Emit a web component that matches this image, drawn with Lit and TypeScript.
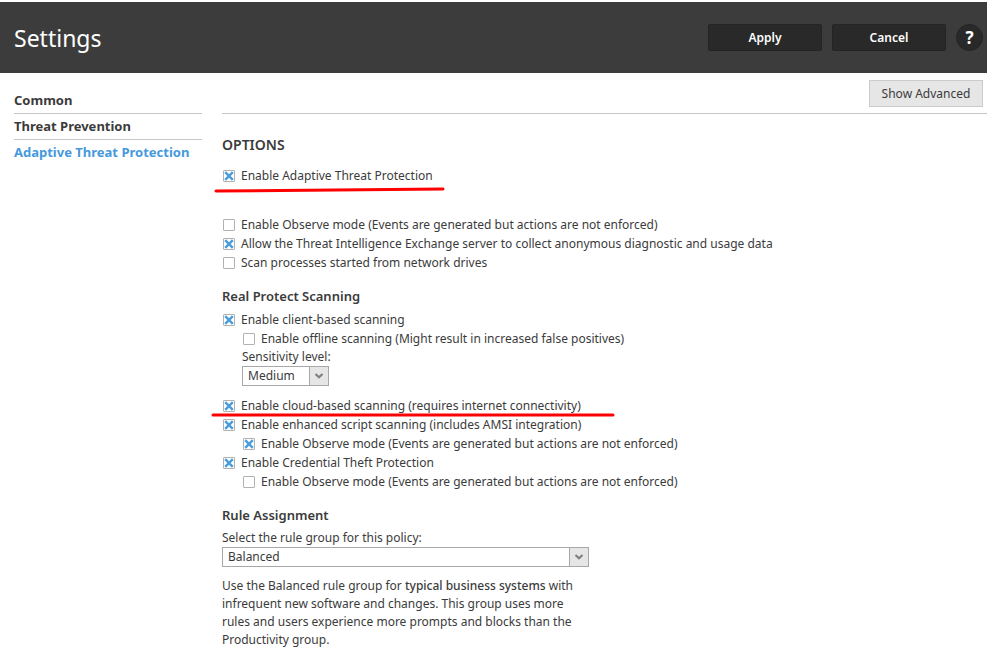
import { LitElement, html, svg, css } from "lit";
import { customElement, property } from "lit/decorators.js";

interface Option {
  id: string;
  text: string;
  on?: boolean;
  nested?: boolean;
}

const GENERAL: Option[] = [
  { id: "observe", text: "Enable Observe mode (Events are generated but actions are not enforced)" },
  {
    id: "tie",
    text: "Allow the Threat Intelligence Exchange server to collect anonymous diagnostic and usage data",
    on: true,
  },
  { id: "network", text: "Scan processes started from network drives" },
];

const CLIENT: Option[] = [
  { id: "client", text: "Enable client-based scanning", on: true },
  { id: "offline", text: "Enable offline scanning (Might result in increased false positives)", nested: true },
];

const SCRIPT: Option[] = [
  { id: "script", text: "Enable enhanced script scanning (includes AMSI integration)", on: true },
  {
    id: "script-observe",
    text: "Enable Observe mode (Events are generated but actions are not enforced)",
    on: true,
    nested: true,
  },
  { id: "credential", text: "Enable Credential Theft Protection", on: true },
  {
    id: "credential-observe",
    text: "Enable Observe mode (Events are generated but actions are not enforced)",
    nested: true,
  },
];

@customElement("option-check")
export class OptionCheck extends LitElement {
  @property({ attribute: false }) option!: Option;

  static styles = css`
    :host {
      display: block;
    }
    .row {
      display: flex;
      align-items: center;
      gap: 6px;
      height: 19px;
      padding-left: 1px;
    }
    .nested {
      padding-left: 21px;
    }
    .mark {
      display: grid;
      flex: none;
    }
    .box,
    .cross {
      grid-area: 1 / 1;
      width: 12px;
      height: 12px;
    }
    .box {
      appearance: none;
      margin: 0;
      box-sizing: border-box;
      border: 1px solid #b2b2b2;
      border-radius: 1px;
      background: #fff;
    }
    .cross {
      pointer-events: none;
      visibility: hidden;
    }
    .box:checked + .cross {
      visibility: visible;
    }
    .text {
      white-space: nowrap;
    }
  `;

  render() {
    const { id, text, on, nested } = this.option;
    return html`
      <div class="row ${nested ? "nested" : ""}">
        <span class="mark">
          <input class="box" type="checkbox" id=${id} .checked=${!!on} />
          <svg class="cross" viewBox="0 0 12 12" aria-hidden="true">
            <path d="M2.2 2.2 9.8 9.8M9.8 2.2 2.2 9.8" fill="none" stroke="#4a9ddb" stroke-width="2.4" />
          </svg>
        </span>
        <label class="text" for=${id}>${text}</label>
      </div>
    `;
  }
}

@customElement("choice-box")
export class ChoiceBox extends LitElement {
  @property() label = "";
  @property({ attribute: false }) choices: string[] = [];

  static styles = css`
    :host {
      display: block;
    }
    .label {
      display: block;
      line-height: 18px;
      white-space: nowrap;
    }
    .frame {
      display: grid;
      grid-template-columns: 1fr 20px;
      height: 20px;
    }
    .select {
      grid-area: 1 / 1 / 2 / 3;
      appearance: none;
      min-width: 0;
      box-sizing: border-box;
      height: 20px;
      padding: 0 20px 0 5px;
      border: 1px solid #aba7a9;
      border-radius: 0;
      background: #fff;
      color: inherit;
      font: inherit;
      line-height: 18px;
    }
    .arrow {
      grid-area: 1 / 2;
      z-index: 1;
      display: flex;
      align-items: center;
      justify-content: center;
      box-sizing: border-box;
      border: 1px solid #aba7a9;
      background: #e6e6e6;
      pointer-events: none;
    }
  `;

  render() {
    return html`
      <label class="label" for="choice">${this.label}</label>
      <div class="frame">
        <select class="select" id="choice">
          ${this.choices.map((c) => html`<option>${c}</option>`)}
        </select>
        <span class="arrow">
          <svg width="10" height="8" viewBox="0 0 10 8" aria-hidden="true">
            <path d="M1.5 2 5 5.3 8.5 2" fill="none" stroke="#808080" stroke-width="2.2" />
          </svg>
        </span>
      </div>
    `;
  }
}

@customElement("app-root")
export class AppRoot extends LitElement {
  static styles = css`
    :host {
      display: block;
      padding-top: 2px;
      background: #fff;
      color: #3b3b3b;
      font: 12px/18px "Noto Sans", "Open Sans", sans-serif;
    }
    .header {
      display: flex;
      align-items: center;
      gap: 10px;
      height: 71px;
      padding: 0 4px 0 14px;
      background: #3c3c3c;
      color: #fff;
    }
    .title {
      flex: 1;
      margin: 0;
      font-size: 23px;
      font-weight: 400;
      line-height: 32px;
    }
    .action,
    .help {
      box-sizing: border-box;
      height: 27px;
      padding: 0;
      border: 1px solid #242424;
      background: #292929;
      color: #fff;
      font: 600 12px/18px "Noto Sans", "Open Sans", sans-serif;
    }
    .action {
      width: 114px;
      border-radius: 2px;
    }
    .help {
      width: 27px;
      border-radius: 50%;
      font-size: 17px;
      font-weight: 700;
    }
    .body {
      display: grid;
      grid-template-columns: 188px 1fr;
      gap: 20px;
      padding-left: 14px;
    }
    .nav {
      padding-top: 15px;
    }
    .link {
      display: block;
      height: 25px;
      border-bottom: 1px solid #c6c6c6;
      color: inherit;
      font-size: 13px;
      font-weight: 700;
      line-height: 24px;
      text-decoration: none;
      white-space: nowrap;
    }
    .link:last-child {
      border-bottom: 0;
      color: #4699dc;
    }
    .toolbar {
      display: flex;
      justify-content: flex-end;
      padding: 7px 4px 6px 0;
      border-bottom: 1px solid #c6c6c6;
    }
    .advanced {
      box-sizing: border-box;
      width: 114px;
      height: 27px;
      padding: 0;
      border: 1px solid #cbcbcb;
      background: #e6e6e6;
      color: inherit;
      font: inherit;
    }
    .group {
      margin-top: 14px;
    }
    .options {
      margin-top: 21px;
    }
    .heading {
      margin: 0 0 4px;
      font-size: 13px;
      font-weight: 600;
      line-height: 20px;
    }
    .options .heading {
      margin-bottom: 11px;
      font-size: 14px;
    }
    .marked {
      position: relative;
    }
    .first {
      margin-bottom: 30px;
    }
    .stroke {
      position: absolute;
      overflow: visible;
      pointer-events: none;
    }
    .stroke-first {
      left: -8px;
      top: 21px;
    }
    .stroke-cloud {
      left: -11px;
      top: 17px;
    }
    .level {
      width: 87px;
      margin: 0 0 10px 20px;
    }
    .rule {
      width: 367px;
    }
    .note {
      max-width: 367px;
      margin: 10px 0 0;
    }
    .strong {
      font-weight: 500;
    }
  `;

  private options(list: Option[]) {
    return list.map((o) => html`<option-check .option=${o}></option-check>`);
  }

  private stroke(name: string, width: number, rise: number) {
    return html`<svg class="stroke ${name}" width=${width} height="6" aria-hidden="true">
      ${svg`<path d="M2 ${2 + rise}L${width - 2} 2" stroke="#fe0000" stroke-width="3" stroke-linecap="round" />`}
    </svg>`;
  }

  render() {
    return html`
      <header class="header">
        <h1 class="title">Settings</h1>
        <button class="action">Apply</button>
        <button class="action">Cancel</button>
        <button class="help" aria-label="Help">?</button>
      </header>
      <div class="body">
        <nav class="nav">
          <a class="link" href="#common">Common</a>
          <a class="link" href="#prevention">Threat Prevention</a>
          <a class="link" href="#adaptive" aria-current="page">Adaptive Threat Protection</a>
        </nav>
        <main>
          <div class="toolbar"><button class="advanced">Show Advanced</button></div>
          <section class="options">
            <h2 class="heading">OPTIONS</h2>
            <div class="marked first">
              ${this.options([{ id: "adaptive", text: "Enable Adaptive Threat Protection", on: true }])}
              ${this.stroke("stroke-first", 231, 2)}
            </div>
            ${this.options(GENERAL)}
          </section>
          <section class="group">
            <h2 class="heading">Real Protect Scanning</h2>
            ${this.options(CLIENT)}
            <choice-box
              class="level"
              label="Sensitivity level:"
              .choices=${["Medium", "Low", "High"]}
            ></choice-box>
            <div class="marked">
              ${this.options([
                { id: "cloud", text: "Enable cloud-based scanning (requires internet connectivity)", on: true },
              ])}
              ${this.stroke("stroke-cloud", 404, 0)}
            </div>
            ${this.options(SCRIPT)}
          </section>
          <section class="group">
            <h2 class="heading">Rule Assignment</h2>
            <choice-box
              class="rule"
              label="Select the rule group for this policy:"
              .choices=${["Balanced", "Productivity", "Security"]}
            ></choice-box>
            <p class="note">
              Use the Balanced rule group for <b class="strong">typical business systems</b> with infrequent new
              software and changes. This group uses more rules and users experience more prompts and blocks than the
              Productivity group.
            </p>
          </section>
        </main>
      </div>
    `;
  }
}
